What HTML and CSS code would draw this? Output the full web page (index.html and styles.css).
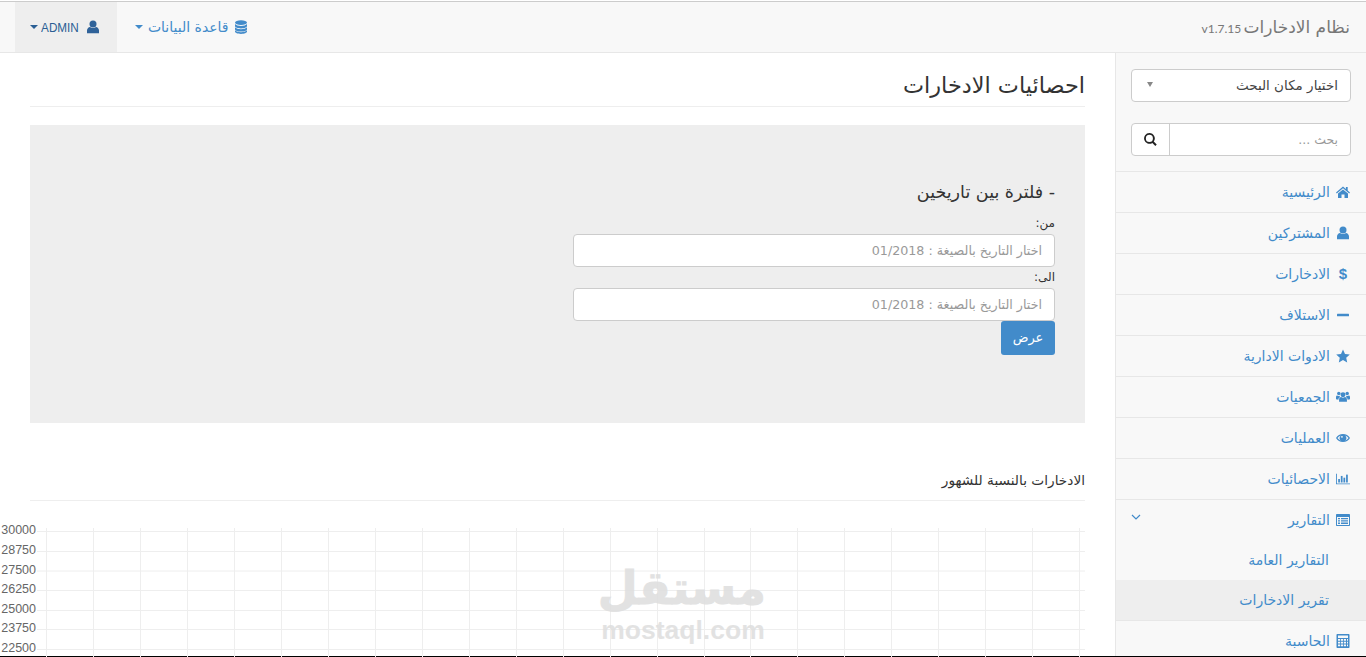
FILE: index.html
```html
<!DOCTYPE html>
<html lang="ar" dir="rtl">
<head>
    <meta charset="UTF-8">
    <meta name="viewport" content="width=device-width, initial-scale=1.0">
    <title>نظام الادخارات</title>
    <link rel="stylesheet" href="styles.css">
</head>
<body>
    <svg class="sprite" xmlns="http://www.w3.org/2000/svg">
        <symbol id="i-user" viewBox="0 0 14 14"><circle cx="7" cy="4" r="3.5"/><path d="M1 13.2V10.5C1 8.6 2.4 7 4 6.9 4.8 7.6 5.8 8 7 8s2.2-.4 3-1.1c1.600.1 3 1.700 3 3.600v2.700z"/></symbol>
        <symbol id="i-db" viewBox="0 0 14 14"><ellipse cx="7" cy="2.600" rx="6" ry="2.400"/><path d="M1 4v2c0 1.300 2.700 2.400 6 2.400S13 7.300 13 6V4c-1 1.300-3.300 2-6 2S2 5.300 1 4z"/><path d="M1 7.200v2c0 1.300 2.700 2.400 6 2.400s6-1.100 6-2.400v-2c-1 1.300-3.300 2-6 2s-5-.7-6-2z"/><path d="M1 10.300v1.200C1 12.800 3.700 13.900 7 13.900s6-1.100 6-2.400v-1.200c-1 1.300-3.300 2-6 2s-5-.7-6-2z"/></symbol>
        <symbol id="i-home" viewBox="0 0 14 14"><path d="M7 1.500 0 7.500l.8 1L7 3.300l6.200 5.200.8-1-2.300-2V2h-1.800v1.900z"/><path d="M7 4.400 2 8.600V13h3.500V9.500h3V13H12V8.600z"/></symbol>
        <symbol id="i-minus" viewBox="0 0 14 14"><rect x="1" y="5.800" width="12" height="2.400" rx=".5"/></symbol>
        <symbol id="i-star" viewBox="0 0 14 14"><path d="M7 .5 9 5l4.800.5-3.600 3.200 1 4.800L7 11l-4.200 2.500 1-4.800L.2 5.500 5 5z"/></symbol>
        <symbol id="i-users" viewBox="0 0 16 14"><circle cx="8" cy="4.500" r="2.800"/><circle cx="3.200" cy="3" r="2"/><circle cx="12.800" cy="3" r="2"/><path d="M3.500 12.500V10c0-1.700 1-3 2.400-3 .6.500 1.300.8 2.100.8s1.500-.3 2.100-.8c1.400 0 2.400 1.300 2.400 3v2.500z"/><path d="M0 9.500V7c0-1 .6-1.800 1.500-1.800.5.400 1.100.6 1.700.6l.8-.1c.1.700.4 1.300.8 1.700C3.600 7.800 2.800 8.700 2.700 10z"/><path d="M16 9.500V7c0-1-.6-1.800-1.500-1.800-.5.400-1.100.6-1.700.6l-.8-.1c-.1.700-.4 1.300-.8 1.700 1.200.4 2 1.300 2.100 2.600z"/></symbol>
        <symbol id="i-eye" viewBox="0 0 16 14"><path fill-rule="evenodd" d="M0 7c1.700-2.800 4.600-4.500 8-4.500s6.300 1.700 8 4.500c-1.700 2.800-4.600 4.500-8 4.500S1.700 9.800 0 7zM1.700 7c1 1.400 2.300 2.400 3.800 3A4.300 4.300 0 0 1 5.500 4C4 4.600 2.700 5.600 1.700 7zm12.600 0c-1-1.400-2.300-2.400-3.800-3a4.300 4.300 0 0 1 0 6c1.500-.6 2.800-1.600 3.800-3z"/><circle cx="6.800" cy="5.600" r="1" fill="#f8f8f8"/></symbol>
        <symbol id="i-chart" viewBox="0 0 16 14"><path d="M0 1h1v11h15v1H0z"/><rect x="2.500" y="7" width="2" height="4"/><rect x="5.500" y="3.500" width="2" height="7.500"/><rect x="8.500" y="5.500" width="2" height="5.500"/><rect x="11.500" y="2" width="2" height="9"/></symbol>
        <symbol id="i-list" viewBox="0 0 14 14"><path fill-rule="evenodd" d="M1 1h12c.6 0 1 .4 1 1v10c0 .6-.4 1-1 1H1c-.6 0-1-.4-1-1V2c0-.6.4-1 1-1zm0 3v8h12V4z"/><path d="M2 5h2v1.300H2zM5 5h7v1.300H5zM2 7.300h2v1.300H2zM5 7.300h7v1.300H5zM2 9.600h2v1.300H2zM5 9.600h7v1.300H5z"/></symbol>
        <symbol id="i-calc" viewBox="0 0 14 14"><path fill-rule="evenodd" d="M1.500 0h11c.6 0 1 .4 1 1v12c0 .6-.4 1-1 1h-11c-.6 0-1-.4-1-1V1c0-.6.4-1 1-1zm.5 1.500v2.500h10V1.500zM2 5v1.800h2.200V5zm3 0v1.800h2.200V5zm3 0v1.800h2V5zm3 0v1.800h1V5zM2 7.700v1.800h2.200V7.700zm3 0v1.800h2.200V7.700zm3 0v1.800h2V7.700zm3 0v1.800h1V7.700zM2 10.400v1.800h2.200v-1.800zm3 0v1.800h2.200v-1.800zm3 0v1.800h2v-1.800zm3 0v1.800h1v-1.800z"/></symbol>
        <symbol id="i-search" viewBox="0 0 14 14"><path fill-rule="evenodd" d="M5.800 0a5.800 5.800 0 0 1 4.700 9.200l3.200 3.200-1.500 1.500-3.200-3.200A5.800 5.800 0 1 1 5.800 0zm0 2a3.800 3.800 0 1 0 0 7.600 3.800 3.800 0 0 0 0-7.600z"/></symbol>
    </svg>

    <div class="topline"></div>
    <nav class="navbar">
        <div class="brand">نظام الادخارات <small>v1.7.15</small></div>
        <ul class="top-menu">
            <li><svg class="icon"><use href="#i-db"/></svg> قاعدة البيانات <span class="caret"></span></li>
            <li class="open"><svg class="icon"><use href="#i-user"/></svg> <span class="latin">ADMIN</span> <span class="caret"></span></li>
        </ul>
    </nav>

    <div class="wrapper">
        <aside class="sidebar">
            <div class="side-forms">
                <div class="fake-select"><span>اختيار مكان البحث</span><span class="select-arrow"></span></div>
                <div class="search-group">
                    <div class="search-input">بحث ...</div>
                    <div class="search-btn"><svg class="icon"><use href="#i-search"/></svg></div>
                </div>
            </div>
            <ul class="side-menu">
                <li><svg class="icon"><use href="#i-home"/></svg>الرئيسية</li>
                <li><svg class="icon"><use href="#i-user"/></svg>المشتركين</li>
                <li><span class="icon dollar">$</span>الادخارات</li>
                <li><svg class="icon"><use href="#i-minus"/></svg>الاستلاف</li>
                <li><svg class="icon"><use href="#i-star"/></svg>الادوات الادارية</li>
                <li><svg class="icon"><use href="#i-users"/></svg>الجمعيات</li>
                <li><svg class="icon"><use href="#i-eye"/></svg>العمليات</li>
                <li><svg class="icon"><use href="#i-chart"/></svg>الاحصائيات</li>
                <li class="has-sub"><svg class="icon"><use href="#i-list"/></svg>التقارير<svg class="chevron" viewBox="0 0 10 6"><path d="M1 1l4 4 4-4" fill="none" stroke="currentColor" stroke-width="1.200"/></svg></li>
                <li class="sub">التقارير العامة</li>
                <li class="sub active">تقرير الادخارات</li>
                <li><svg class="icon"><use href="#i-calc"/></svg>الحاسبة</li>
            </ul>
        </aside>

        <main class="main">
            <div class="content">
                <h1 class="page-title">احصائيات الادخارات</h1>

                <div class="well">
                    <h4>- فلترة بين تاريخين</h4>
                    <label>من:</label>
                    <div class="date-input">اختار التاريخ بالصيغة : 01/2018</div>
                    <label>الى:</label>
                    <div class="date-input">اختار التاريخ بالصيغة : 01/2018</div>
                    <div class="btn">عرض</div>
                </div>

                <h5 class="section-title">الادخارات بالنسبة للشهور</h5>
            </div>

            <div class="chart">
                <svg class="chart-svg" width="1085" height="133" viewBox="0 -4 1085 133">
                    <path class="grid" d="M37 3.500H1085M37 23.500H1085M37 43H1085M37 62.500H1085M37 82.500H1085M37 101.500H1085M37 121.500H1085M46.500 0V129M93.500 0V129M140.500 0V129M187.500 0V129M234.500 0V129M281.500 0V129M328.500 0V129M375.500 0V129M422.500 0V129M469.500 0V129M516.500 0V129M563.500 0V129M610.500 0V129M657.500 0V129M704.500 0V129M750.500 0V129M797.500 0V129M844.500 0V129M891.500 0V129M938.500 0V129M985.500 0V129M1032.500 0V129M1079.500 0V129"/>
                    <g class="ticks">
                        <text x="36" y="6">30000</text>
                        <text x="36" y="26">28750</text>
                        <text x="36" y="46">27500</text>
                        <text x="36" y="65">26250</text>
                        <text x="36" y="85">25000</text>
                        <text x="36" y="104">23750</text>
                        <text x="36" y="124">22500</text>
                    </g>
                </svg>
            </div>

            <div class="watermark">
                <div class="wm-ar">مستقل</div>
                <div class="wm-en">mostaql.com</div>
            </div>
        </main>
    </div>
    <div class="bottomline"></div>
</body>
</html>
```
FILE: styles.css
```css
* {
    margin: 0;
    padding: 0;
    box-sizing: border-box;
}

html, body {
    height: 657px;
    overflow: hidden;
}

body {
    display: flex;
    flex-direction: column;
    background: #fff;
    color: #333;
    font-family: "DejaVu Sans", sans-serif;
    font-size: 14px;
    padding-top: 1px;
}

ul {
    list-style: none;
}

.sprite {
    display: none;
}

.topline {
    height: 1px;
    background: #ccc;
    flex: none;
}

.bottomline {
    height: 1px;
    background: #000;
    flex: none;
}

.icon {
    width: 14px;
    height: 14px;
    fill: currentColor;
    color: #428bca;
    flex: none;
}

.navbar {
    display: flex;
    justify-content: space-between;
    height: 51px;
    flex: none;
    background: #f8f8f8;
    border-bottom: 1px solid #e7e7e7;
}

.brand {
    padding: 15px 16px 0 0;
    font-size: 17px;
    color: #777;
    white-space: nowrap;
}

.brand small {
    font-size: 12px;
    font-family: "Lato", sans-serif;
    margin-right: -3px;
}

.top-menu {
    display: flex;
    margin-left: 15px;
}

.top-menu li {
    display: flex;
    align-items: center;
    gap: 5px;
    padding: 0 15px 0 18px;
    color: #428bca;
    font-size: 14px;
}

.top-menu .open {
    background: #eee;
    color: #2a5e94;
    padding: 0 17px 0 15px;
}

.top-menu .open .icon {
    color: #2f6299;
}

.latin {
    font-family: "Liberation Sans", sans-serif;
    font-size: 13px;
    margin-left: -4px;
    transform: scaleX(.9);
}

.caret {
    width: 0;
    height: 0;
    border-top: 4px solid currentColor;
    border-left: 4px solid transparent;
    border-right: 4px solid transparent;
}

.wrapper {
    flex: 1;
    display: flex;
    min-height: 0;
}

.sidebar {
    width: 251px;
    flex: none;
    background: #f8f8f8;
    border-left: 1px solid #e7e7e7;
}

.side-forms {
    padding: 16px 15px 15px;
    display: flex;
    flex-direction: column;
    gap: 21px;
}

.fake-select {
    display: flex;
    justify-content: space-between;
    align-items: center;
    height: 33px;
    padding: 0 12px 2px;
    background: #fff;
    border: 1px solid #ccc;
    border-radius: 4px;
    color: #444;
    font-size: 13.500px;
}

.select-arrow {
    width: 0;
    height: 0;
    margin-left: 3px;
    border-top: 5px solid #888;
    border-left: 3.500px solid transparent;
    border-right: 3.500px solid transparent;
}

.search-group {
    display: flex;
    height: 33px;
    background: #fff;
    border: 1px solid #ccc;
    border-radius: 4px;
}

.search-input {
    flex: 1;
    padding: 0 12px;
    line-height: 31px;
    color: #999;
    font-size: 12.500px;
}

.search-btn {
    width: 38px;
    display: flex;
    align-items: center;
    justify-content: center;
    border-right: 1px solid #ccc;
}

.search-btn .icon {
    color: #222;
    width: 13px;
    height: 13px;
}

.side-menu li {
    position: relative;
    display: flex;
    align-items: center;
    gap: 6px;
    height: 41px;
    padding-right: 16px;
    border-top: 1px solid #e7e7e7;
    color: #428bca;
    font-size: 14px;
}

.side-menu .has-sub {
    align-items: flex-start;
    padding-top: 12px;
}

.side-menu .has-sub .icon {
    margin-top: 1px;
}

.side-menu .sub {
    height: 40px;
    padding-right: 37px;
    border-top: 0;
}

.side-menu .active {
    background: #eee;
}

.chevron {
    position: absolute;
    left: 15px;
    top: 14px;
    width: 10px;
    height: 6px;
}

.dollar {
    display: block;
    width: 14px;
    text-align: center;
    font-family: "Liberation Sans", sans-serif;
    font-weight: bold;
    font-size: 15px;
    line-height: 14px;
}

.main {
    position: relative;
    flex: 1;
    min-width: 0;
}

.content {
    padding: 0 30px;
}

.page-title {
    font-size: 22.400px;
    font-weight: normal;
    color: #333;
    height: 54px;
    padding-top: 19px;
    border-bottom: 1px solid #eee;
}

.well {
    height: 298px;
    margin-top: 18px;
    padding: 57px 30px 0;
    background: #eee;
}

.well h4 {
    font-size: 17.500px;
    font-weight: normal;
    line-height: 20px;
    margin-bottom: 11px;
}

.well label {
    display: block;
    font-size: 12px;
    height: 21px;
    line-height: 20px;
}

.date-input {
    width: 482px;
    height: 33px;
    padding: 0 12px;
    line-height: 31px;
    background: #fff;
    border: 1px solid #ccc;
    border-radius: 4px;
    color: #999;
    font-size: 12.700px;
}

.btn {
    width: 54px;
    height: 34px;
    line-height: 33px;
    text-align: center;
    background: #428bca;
    color: #fff;
    border-radius: 3px;
    font-size: 13px;
}

.section-title {
    font-size: 13.700px;
    font-weight: normal;
    color: #333;
    height: 78px;
    padding-top: 49px;
    border-bottom: 1px solid #eee;
}

.chart {
    margin: 23px 30px 0 0;
    direction: ltr;
}

.chart-svg {
    display: block;
}

.grid {
    stroke: #eee;
    stroke-width: 1;
    fill: none;
}

.ticks text {
    font-family: "Liberation Sans", sans-serif;
    font-size: 12.500px;
    fill: #666;
    text-anchor: end;
}

.watermark {
    position: absolute;
    top: 512px;
    left: 600px;
    width: 166px;
    text-align: center;
    color: #dedede;
    opacity: .85;
    font-weight: bold;
    line-height: 1;
}

.wm-ar {
    font-size: 46px;
    height: 52px;
    -webkit-text-stroke: 1px #dedede;
}

.wm-en {
    font-family: "Liberation Sans", sans-serif;
    font-size: 26.500px;
    direction: ltr;
}
```
